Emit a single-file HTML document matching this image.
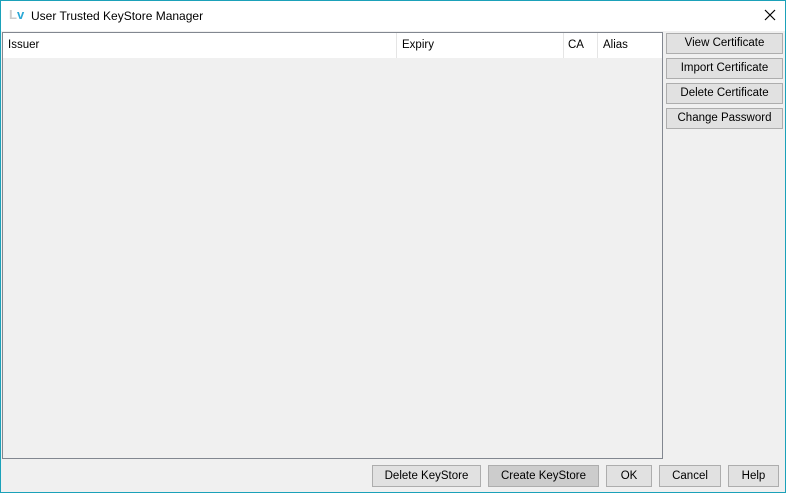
<html><head><style>
body{margin:0;width:786px;height:493px;overflow:hidden;font-family:"Liberation Sans",sans-serif;font-size:11.5px;color:#000}
#w{position:absolute;left:0;top:0;width:784px;height:491px;border:1px solid #1ba1b9;background:#f0f0f0}
#t{position:absolute;left:0;top:0;width:784px;height:30px;background:#fff}
.a{position:absolute}
.b{position:absolute;background:#e1e1e1;border:1px solid #adadad;box-sizing:border-box;text-align:center;line-height:18px;font-size:11.5px}
</style></head><body><div id="w">
<div id="t">
<span class="a" style="left:8px;top:6px;font-size:13px;font-weight:bold;color:#ccc">L<span style="color:#2aa8d6">v</span></span>
<span class="a" style="left:30px;top:8px;font-size:12px">User Trusted KeyStore Manager</span>
<svg class="a" style="left:763px;top:8px" width="12" height="12"><path d="M1 1L11 11M11 1L1 11" stroke="#000" stroke-width="1.2"/></svg>
</div>
<div class="a" style="left:1px;top:31px;width:659px;height:425px;border:1px solid #828790;background:#f0f0f0">
<div class="a" style="left:0;top:0;width:659px;height:25px;background:#fff;border-bottom:1px solid #f0f0f0"></div>
<div class="a" style="left:393px;top:0;width:1px;height:25px;background:#e5e5e5"></div>
<div class="a" style="left:560px;top:0;width:1px;height:25px;background:#e5e5e5"></div>
<div class="a" style="left:594px;top:0;width:1px;height:25px;background:#e5e5e5"></div>
<span class="a" style="left:5px;top:6px">Issuer</span>
<span class="a" style="left:399px;top:6px">Expiry</span>
<span class="a" style="left:565px;top:6px">CA</span>
<span class="a" style="left:600px;top:6px">Alias</span>
</div>
<div class="b" style="left:665px;top:32px;width:117px;height:21px">View Certificate</div>
<div class="b" style="left:665px;top:57px;width:117px;height:21px">Import Certificate</div>
<div class="b" style="left:665px;top:82px;width:117px;height:21px">Delete Certificate</div>
<div class="b" style="left:665px;top:107px;width:117px;height:21px">Change Password</div>
<div class="b" style="left:371px;top:464px;width:109px;height:22px;line-height:20px">Delete KeyStore</div>
<div class="b" style="left:487px;top:464px;width:111px;height:22px;line-height:20px;background:#ccc">Create KeyStore</div>
<div class="b" style="left:605px;top:464px;width:46px;height:22px;line-height:20px">OK</div>
<div class="b" style="left:658px;top:464px;width:62px;height:22px;line-height:20px">Cancel</div>
<div class="b" style="left:727px;top:464px;width:51px;height:22px;line-height:20px">Help</div>
</div></body></html>
